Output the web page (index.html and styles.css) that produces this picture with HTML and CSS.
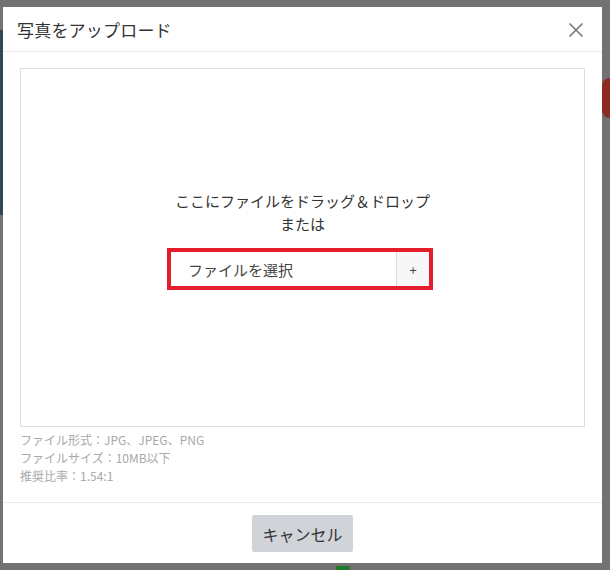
FILE: index.html
```html
<!DOCTYPE html>
<html lang="ja">
<head>
<meta charset="utf-8">
<link rel="stylesheet" href="styles.css">
</head>
<body>
<div class="bg-teal"></div>
<div class="bg-red"></div>
<div class="bg-green"></div>
<div class="modal">
  <div class="modal-header">
    <h1 class="modal-title">写真をアップロード</h1>
    <svg class="close" width="16" height="16" viewBox="0 0 16 16"><path d="M1.5 1.5L14.5 14.5M14.5 1.5L1.5 14.5" stroke="#777" stroke-width="1.6" fill="none"/></svg>
  </div>
  <div class="modal-body">
    <div class="dropzone">
      <p class="drop-text">ここにファイルをドラッグ＆ドロップ<br>または</p>
      <div class="picker">
        <div class="picker-input">ファイルを選択</div>
        <div class="picker-btn">+</div>
      </div>
    </div>
    <div class="notes">
      <div>ファイル形式：JPG、JPEG、PNG</div>
      <div>ファイルサイズ：10MB以下</div>
      <div>推奨比率：1.54:1</div>
    </div>
  </div>
  <div class="modal-footer">
    <button class="cancel">キャンセル</button>
  </div>
</div>
</body>
</html>
```
FILE: styles.css
```css
html, body {
  margin: 0;
  padding: 0;
  overflow: hidden;
}
body {
  width: 610px;
  height: 570px;
  background: #727272;
  font-family: "Noto Sans CJK JP", "Liberation Sans", sans-serif;
  padding: 7px 0 0 3px;
  box-sizing: border-box;
  position: relative;
}
.bg-teal {
  position: absolute;
  left: 0;
  top: 30px;
  width: 3px;
  height: 185px;
  background: #2d4a52;
}
.bg-red {
  position: absolute;
  left: 602px;
  top: 78px;
  width: 8px;
  height: 40px;
  border-radius: 20px 0 0 20px;
  background: #8e2a20;
}
.bg-green {
  position: absolute;
  left: 336px;
  top: 566px;
  width: 14px;
  height: 4px;
  background: #1f7a2a;
}
.modal {
  position: relative;
  width: 599px;
  height: 556px;
  background: #fff;
  display: flex;
  flex-direction: column;
}
.modal-header {
  height: 44px;
  border-bottom: 1px solid #e9e9e9;
  display: flex;
  align-items: center;
  justify-content: space-between;
  padding: 0 18px 0 14px;
}
.modal-title {
  margin: 0;
  font-size: 17px;
  font-weight: 400;
  color: #333;
  letter-spacing: 0.2px;
}
.close {
  display: block;
  margin-top: 1px;
}
.modal-body {
  padding: 16px 17px 0 17px;
  flex: 1;
}
.dropzone {
  height: 359px;
  border: 1px solid #dedede;
  box-sizing: border-box;
  display: flex;
  flex-direction: column;
  align-items: center;
  padding-top: 120px;
}
.drop-text {
  margin: 0;
  text-align: center;
  font-size: 15px;
  line-height: 23px;
  color: #333;
}
.picker {
  margin-top: 13px;
  width: 266px;
  height: 42px;
  border: 4px solid #e31d2b;
  box-sizing: border-box;
  display: flex;
  margin-right: 5px;
}
.picker-input {
  flex: 1;
  display: flex;
  align-items: center;
  padding-left: 17px;
  font-size: 15px;
  color: #444;
}
.picker-btn {
  width: 32px;
  border-left: 1px solid #dcdcdc;
  background: #f7f7f8;
  display: flex;
  align-items: center;
  justify-content: center;
  font-size: 13px;
  color: #444;
}
.notes {
  margin-top: 4px;
  font-size: 12px;
  line-height: 18px;
  color: #a9a9a9;
}
.modal-footer {
  border-top: 1px solid #e9e9e9;
  height: 61px;
  box-sizing: border-box;
  display: flex;
  justify-content: center;
  padding-top: 12px;
}
.cancel {
  width: 101px;
  height: 37px;
  border: none;
  border-radius: 2px;
  background: #d0d4d9;
  font-family: inherit;
  font-size: 16px;
  color: #333;
  padding: 0;
}
```
